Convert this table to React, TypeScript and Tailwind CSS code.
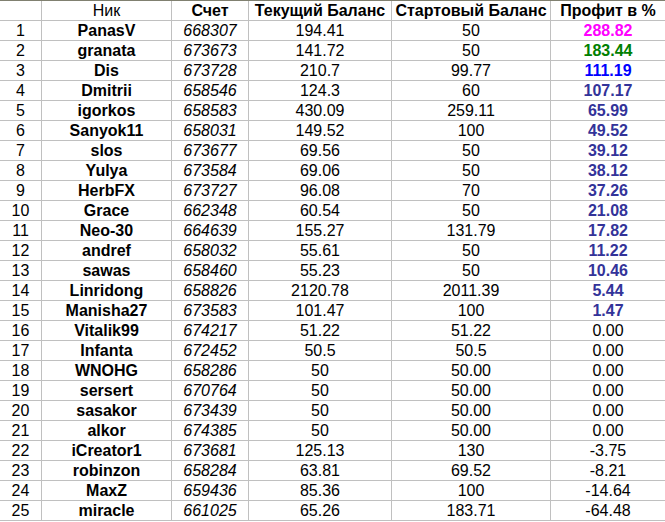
import React from 'react'

type Row = {
  n: number
  nick: string
  acc: string
  cur: string
  start: string
  profit: string
}

const rows: Row[] = [
  { n: 1, nick: 'PanasV', acc: '668307', cur: '194.41', start: '50', profit: '288.82' },
  { n: 2, nick: 'granata', acc: '673673', cur: '141.72', start: '50', profit: '183.44' },
  { n: 3, nick: 'Dis', acc: '673728', cur: '210.7', start: '99.77', profit: '111.19' },
  { n: 4, nick: 'Dmitrii', acc: '658546', cur: '124.3', start: '60', profit: '107.17' },
  { n: 5, nick: 'igorkos', acc: '658583', cur: '430.09', start: '259.11', profit: '65.99' },
  { n: 6, nick: 'Sanyok11', acc: '658031', cur: '149.52', start: '100', profit: '49.52' },
  { n: 7, nick: 'slos', acc: '673677', cur: '69.56', start: '50', profit: '39.12' },
  { n: 8, nick: 'Yulya', acc: '673584', cur: '69.06', start: '50', profit: '38.12' },
  { n: 9, nick: 'HerbFX', acc: '673727', cur: '96.08', start: '70', profit: '37.26' },
  { n: 10, nick: 'Grace', acc: '662348', cur: '60.54', start: '50', profit: '21.08' },
  { n: 11, nick: 'Neo-30', acc: '664639', cur: '155.27', start: '131.79', profit: '17.82' },
  { n: 12, nick: 'andref', acc: '658032', cur: '55.61', start: '50', profit: '11.22' },
  { n: 13, nick: 'sawas', acc: '658460', cur: '55.23', start: '50', profit: '10.46' },
  { n: 14, nick: 'Linridong', acc: '658826', cur: '2120.78', start: '2011.39', profit: '5.44' },
  { n: 15, nick: 'Manisha27', acc: '673583', cur: '101.47', start: '100', profit: '1.47' },
  { n: 16, nick: 'Vitalik99', acc: '674217', cur: '51.22', start: '51.22', profit: '0.00' },
  { n: 17, nick: 'Infanta', acc: '672452', cur: '50.5', start: '50.5', profit: '0.00' },
  { n: 18, nick: 'WNOHG', acc: '658286', cur: '50', start: '50.00', profit: '0.00' },
  { n: 19, nick: 'sersert', acc: '670764', cur: '50', start: '50.00', profit: '0.00' },
  { n: 20, nick: 'sasakor', acc: '673439', cur: '50', start: '50.00', profit: '0.00' },
  { n: 21, nick: 'alkor', acc: '674385', cur: '50', start: '50.00', profit: '0.00' },
  { n: 22, nick: 'iCreator1', acc: '673681', cur: '125.13', start: '130', profit: '-3.75' },
  { n: 23, nick: 'robinzon', acc: '658284', cur: '63.81', start: '69.52', profit: '-8.21' },
  { n: 24, nick: 'MaxZ', acc: '659436', cur: '85.36', start: '100', profit: '-14.64' },
  { n: 25, nick: 'miracle', acc: '661025', cur: '65.26', start: '183.71', profit: '-64.48' },
]

// first rows get their own colour, the rest of the positives are indigo
function profitClass(r: Row) {
  if (r.n === 1) return 'font-bold text-[#ff00ff]'
  if (r.n === 2) return 'font-bold text-[#008000]'
  if (r.n === 3) return 'font-bold text-[#0000ff]'
  if (parseFloat(r.profit) > 0) return 'font-bold text-[#333399]'
  return 'text-black'
}

const cell = 'h-5 flex items-center justify-center border-b border-r border-[#c0c0c0] whitespace-nowrap overflow-hidden'
const cols = 'grid grid-cols-[42px_130px_77px_143px_159px_115px]'

export default function App() {
  return (
    <div
      className="w-[665px] h-[522px] overflow-hidden bg-white text-black text-[16px] leading-none"
      style={{ fontFamily: '"Liberation Sans", Arial, sans-serif' }}
    >
      <div className={`${cols} border-t border-[#808070]`}>
        <div className={cell} />
        <div className={cell}>Ник</div>
        <div className={`${cell} font-bold`}>Счет</div>
        <div className={`${cell} font-bold`}>Текущий Баланс</div>
        <div className={`${cell} font-bold`}>Стартовый Баланс</div>
        <div className={`${cell} font-bold`}>Профит в %</div>
      </div>
      {rows.map((r) => (
        <div key={r.n} className={cols}>
          <div className={cell}>{r.n}</div>
          <div className={`${cell} font-bold`}>{r.nick}</div>
          <div className={`${cell} italic`}>{r.acc}</div>
          <div className={cell}>{r.cur}</div>
          <div className={cell}>{r.start}</div>
          <div className={`${cell} ${profitClass(r)}`}>{r.profit}</div>
        </div>
      ))}
    </div>
  )
}
